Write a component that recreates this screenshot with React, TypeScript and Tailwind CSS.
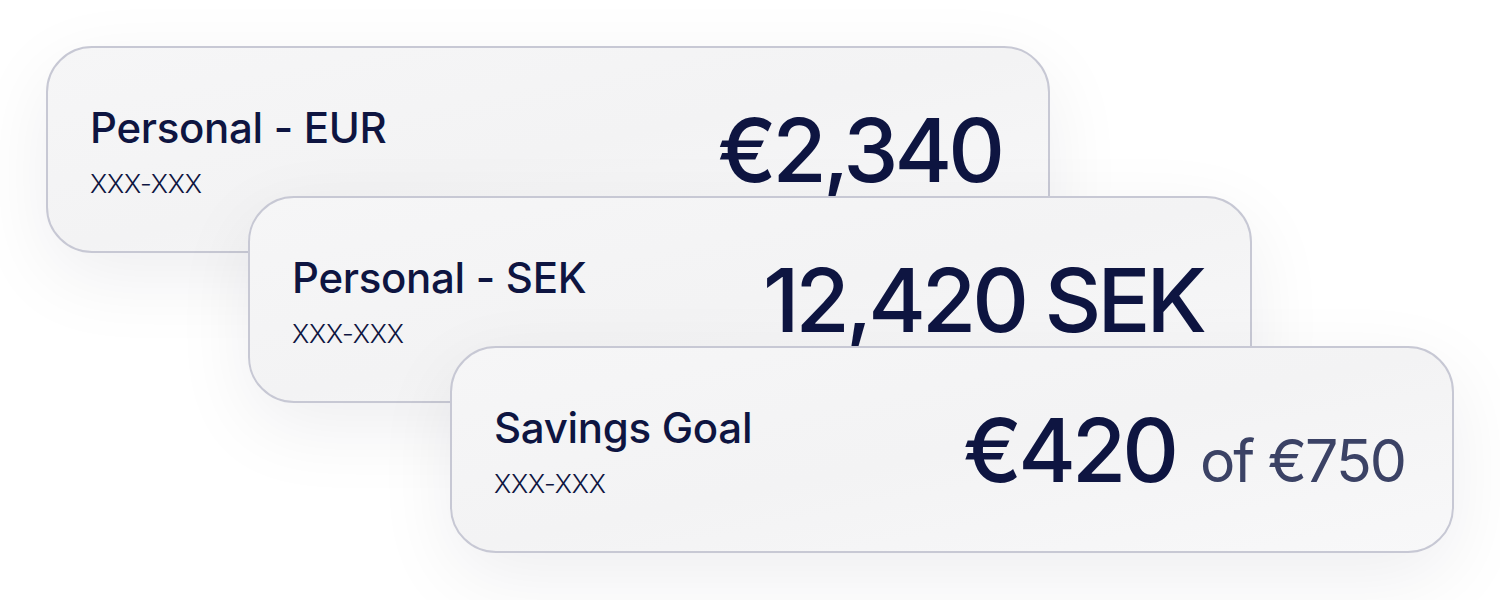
import React from "react";

type CardProps = {
  title: string;
  sub: string;
  amount: React.ReactNode;
  className?: string;
};

function Card({ title, sub, amount, className = "" }: CardProps) {
  return (
    <div
      className={
        "relative w-[1004px] h-[207px] shrink-0 rounded-[46px] border-2 border-[#c7c8d4] bg-gradient-to-br from-[#f6f6f7] via-[#f3f3f4] to-[#f8f8f9] shadow-[0_24px_80px_rgba(20,20,40,0.07)] flex items-center justify-between pl-[42px] pr-[47px] " +
        className
      }
    >
      <div className="flex flex-col pt-[4px]">
        <div className="text-[42px] leading-[46px] font-medium text-[#0e1541] tracking-[-0.3px]">
          {title}
        </div>
        <div className="text-[26px] leading-[30px] font-light text-[#0e1541] mt-[18px] tracking-[-0.2px]">
          {sub}
        </div>
      </div>
      <div className="flex items-baseline text-[#0e1541]">{amount}</div>
    </div>
  );
}

export default function App() {
  return (
    <div
      className="w-[1500px] h-[600px] bg-white overflow-hidden flex flex-col pt-[46px] pl-[46px]"
      style={{ fontFamily: "Inter, 'Noto Sans', sans-serif" }}
    >
      <Card
        title="Personal - EUR"
        sub="XXX-XXX"
        amount={
          <span className="text-[88px] leading-none font-medium tracking-[-4px]">€2,340</span>
        }
      />
      <Card
        className="ml-[202px] -mt-[57px]"
        title="Personal - SEK"
        sub="XXX-XXX"
        amount={
          <span className="text-[88px] leading-none font-medium tracking-[-4px]">12,420 SEK</span>
        }
      />
      <Card
        className="ml-[404px] -mt-[57px]"
        title="Savings Goal"
        sub="XXX-XXX"
        amount={
          <>
            <span className="text-[88px] leading-none font-medium tracking-[-4px]">€420</span>
            <span className="text-[59px] leading-none font-normal text-[#3b4265] ml-[25px] tracking-[-2px]">
              of €750
            </span>
          </>
        }
      />
    </div>
  );
}
